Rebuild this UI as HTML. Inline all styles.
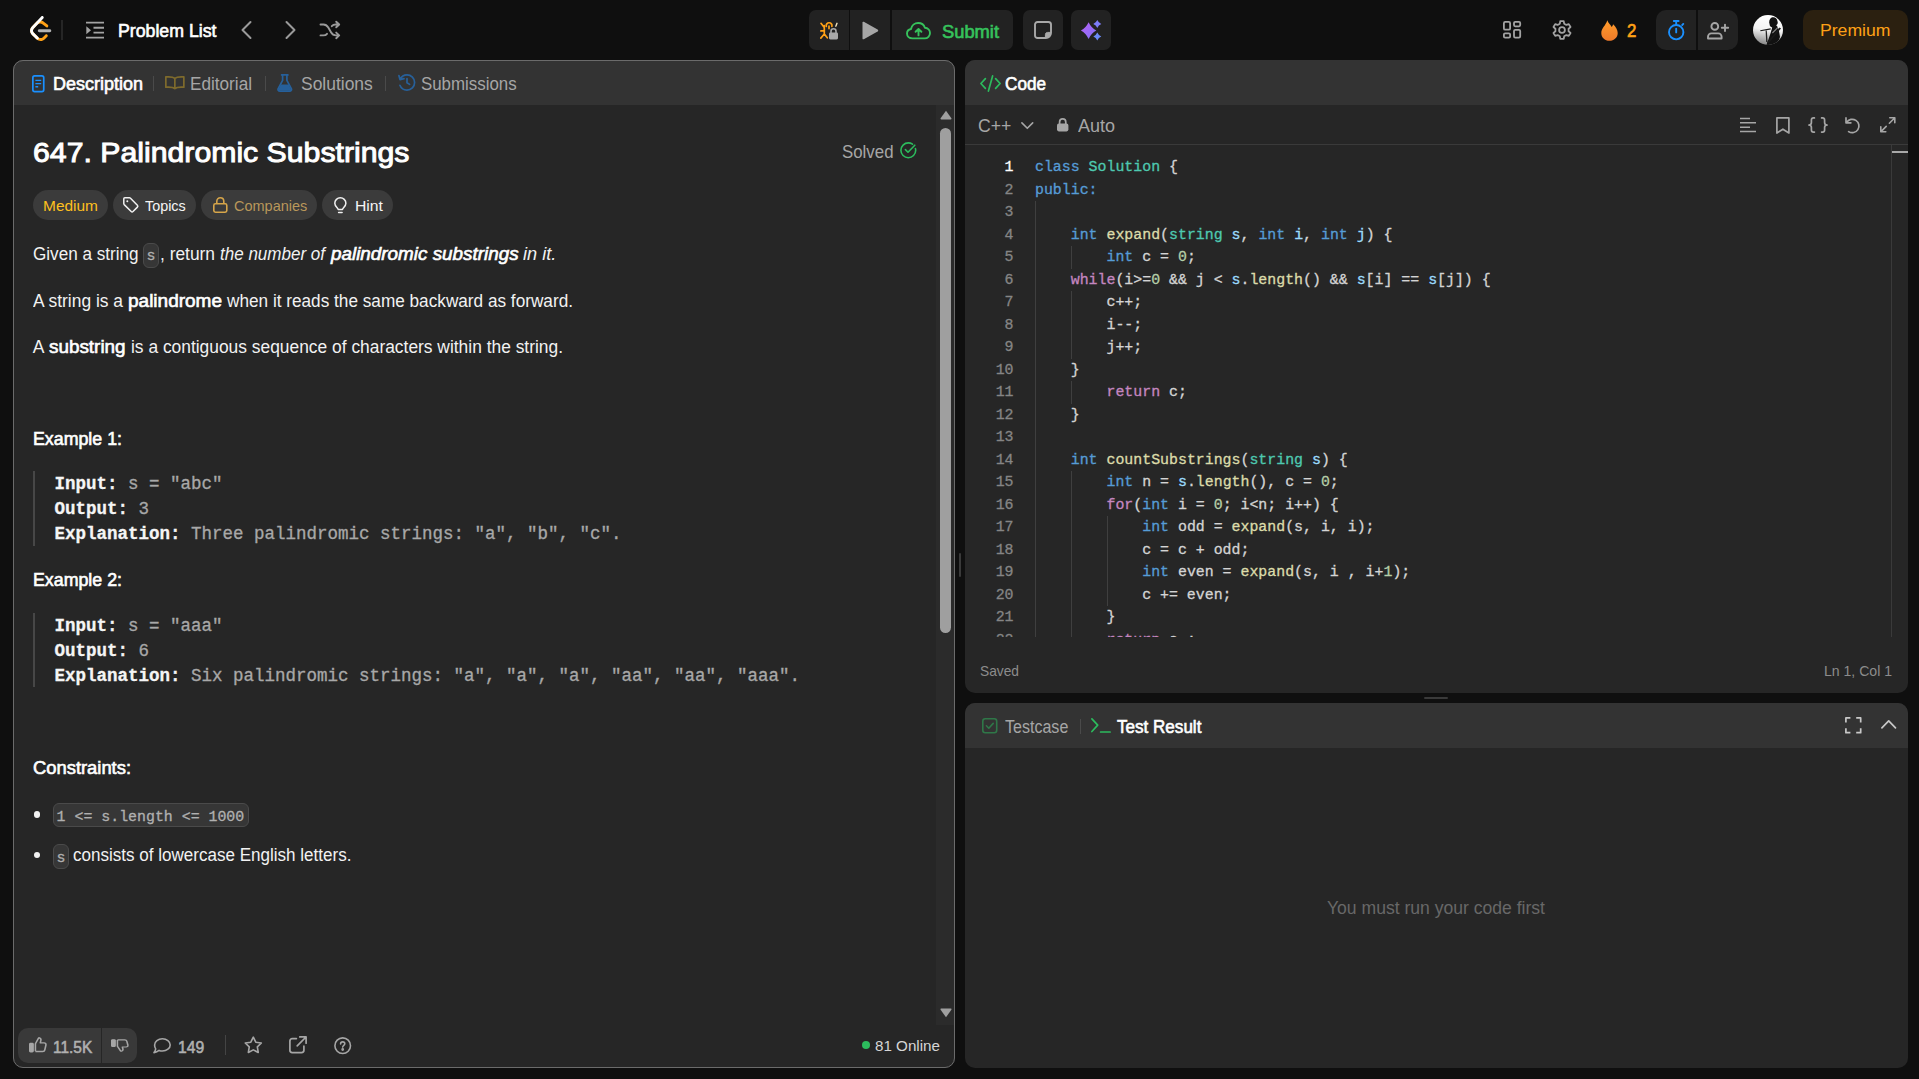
<!DOCTYPE html>
<html lang="en">
<head>
<meta charset="utf-8">
<title>Palindromic Substrings - LeetCode</title>
<style>
*{box-sizing:border-box;margin:0;padding:0}
html,body{width:1919px;height:1079px;overflow:hidden;background:#0f0f0f}
body{position:relative;font-family:"Liberation Sans",sans-serif;color:#f5f5f5;font-size:17.5px}
div,span.t,svg{position:absolute}
span.t{white-space:pre}
svg{overflow:visible}
.panel{background:#262626;border-radius:10px;overflow:hidden}
.hdr{left:0;top:0;right:0;height:45px;background:#333333}
.btn{background:#222222}
.pill{top:190.3px;height:29.7px;border-radius:15px;background:#3b3b3b}
.ic{background:#363636;border:1px solid #4a4a4a;border-radius:6px}
.bar{left:33px;width:2px;background:#474747}
.sep{width:1px;background:#4a4a4a}
.guide{width:1px;background:#3f3f3f}
.k{color:#569cd6}.ty{color:#4ec9b0}.f{color:#dcdcaa}.v{color:#9cdcfe}.c{color:#c586c0}.n{color:#b5cea8}
.pre b{color:#f5f5f5}
</style>
</head>
<body>
<div id="nav">
<svg style="left:29.6px;top:16px" width="21.4" height="25" viewBox="0 0 95 111"><path d="M68.0063 83.0664C70.5 80.5764 74.5366 80.5829 77.0223 83.0809C79.508 85.579 79.5015 89.6226 77.0078 92.1127L65.9346 103.17C55.7187 113.371 39.06 113.519 28.6718 103.513C28.6117 103.456 23.9861 98.9201 8.72653 83.957C-1.42528 74.0029 -2.43665 58.0749 7.11648 47.8464L24.9282 28.7745C34.4095 18.6219 51.887 17.5122 62.7275 26.2789L78.9048 39.362C81.6444 41.5776 82.0723 45.5985 79.8606 48.3429C77.6488 51.0873 73.635 51.5159 70.8954 49.3003L54.7182 36.2173C49.0488 31.6325 39.1314 32.2622 34.2394 37.5006L16.4274 56.5727C11.7767 61.5522 12.2861 69.574 17.6456 74.8292C28.851 85.8169 37.4869 94.2846 37.4969 94.2942C42.8977 99.496 51.6304 99.4184 56.9331 94.1234L68.0063 83.0664Z" fill="#FFA116"/><path d="M41.1067 72.0014C37.5858 72.0014 34.7314 69.1421 34.7314 65.615C34.7314 62.0879 37.5858 59.2286 41.1067 59.2286H88.1245C91.6454 59.2286 94.4997 62.0879 94.4997 65.615C94.4997 69.1421 91.6454 72.0014 88.1245 72.0014H41.1067Z" fill="#B3B3B3"/><path d="M49.9118 2.02335C52.3173 -0.55232 56.3517 -0.686894 58.9228 1.72277C61.494 4.13244 61.6284 8.17385 59.2229 10.7495L16.4276 56.5729C11.7768 61.552 12.2861 69.5738 17.6453 74.8292L37.4088 94.2091C39.9249 96.6764 39.968 100.72 37.505 103.24C35.042 105.761 31.0056 105.804 28.4895 103.337L8.72593 83.9567C-1.42529 74.0021 -2.43665 58.0741 7.1169 47.8463L49.9118 2.02335Z" fill="#fff"/></svg>
<div style="left:61px;top:20px;width:2px;height:20px;background:#262626"></div>
<svg style="left:86px;top:21px" width="18" height="18" viewBox="0 0 18 18" fill="none" stroke="#a3a3a3" stroke-width="1.9"><path d="M0 1.6H18M7.5 6.8H18M7.5 11.6H18M0 16.6H18"/><path d="M0.3 5.2L5 9.2L0.3 13.2Z" fill="#a3a3a3" stroke="none"/></svg>
<svg style="left:241px;top:21px" width="11" height="18" viewBox="0 0 11 18" fill="none" stroke="#9a9a9a" stroke-width="2" stroke-linecap="round" stroke-linejoin="round"><path d="M9.5 1L1.5 9L9.5 17"/></svg>
<svg style="left:284.5px;top:21px" width="11" height="18" viewBox="0 0 11 18" fill="none" stroke="#9a9a9a" stroke-width="2" stroke-linecap="round" stroke-linejoin="round"><path d="M1.5 1L9.5 9L1.5 17"/></svg>
<svg style="left:320px;top:21px" width="20" height="18" viewBox="0 0 20 18" fill="none" stroke="#9a9a9a" stroke-width="1.9" stroke-linecap="round" stroke-linejoin="round"><path d="M0.5 3.5H3.5C6 3.5 7 4.5 8.3 6.5L11 11.3C12.2 13.4 13.3 14.4 15.8 14.4H19M0.5 14.4H3.5C5 14.4 6.2 13.8 7 12.8M11.8 5.2C12.7 4.1 13.9 3.5 15.8 3.5H19M16.2 0.7L19.2 3.5L16.2 6.3M16.2 11.6L19.2 14.4L16.2 17.2"/></svg>

<div class="btn" style="left:809px;top:10px;width:40px;height:40px;border-radius:7px 0 0 7px"></div>
<div class="btn" style="left:850px;top:10px;width:40.3px;height:40px"></div>
<div class="btn" style="left:892.3px;top:10px;width:120.7px;height:40px;border-radius:0 7px 7px 0"></div>
<div class="btn" style="left:1023px;top:10px;width:40px;height:40px;border-radius:7px"></div>
<div class="btn" style="left:1071px;top:10px;width:40px;height:40px;border-radius:7px"></div>
<svg style="left:819px;top:21px" width="20" height="19" viewBox="0 0 20 19" fill="none" stroke="#ffa116" stroke-width="1.7" stroke-linecap="round"><path d="M7.3 5.4A2.9 2.9 0 1 1 12.9 5.4M10 5.2V7.6M5.3 4.7V13M5.3 6.5L2 2.3M5.3 9.9H1.9M5.3 13L1.8 17.1M5.3 13L8.3 16.8"/><path d="M16.8 5.2L18 2.3" stroke="#f3e3bd" stroke-width="1.4"/><rect x="10" y="11.4" width="9" height="7" rx="1.3" fill="#a9a9a9" stroke="none"/><path d="M12 11.8V10.2A2.5 2.5 0 0 1 17 10.2V11.8" stroke="#a9a9a9" stroke-width="1.6"/></svg>
<svg style="left:861.5px;top:20.5px" width="17" height="19" viewBox="0 0 17 19"><path d="M1.8 0.8L15.6 8.6C16.4 9.1 16.4 9.9 15.6 10.4L1.8 18.2C1 18.6 0.5 18.2 0.5 17.4V1.6C0.5 0.8 1 0.4 1.8 0.8Z" fill="#a6a6a6"/></svg>
<svg style="left:906px;top:21.5px" width="25" height="17.5" viewBox="0 0 25 17.5" fill="none" stroke="#36c25c" stroke-width="1.9" stroke-linecap="round" stroke-linejoin="round"><path d="M6.4 16.4C3.3 16.4 1 14.3 1 11.6C1 9.2 2.7 7.4 5 7C5.6 3.6 8.6 1 12.2 1C15.4 1 18 3 18.9 5.8C21.8 6 24 8.3 24 11.1C24 14 21.7 16.4 18.7 16.4Z"/><path d="M12.5 13.4V7.2M9.6 9.8L12.5 7L15.4 9.8"/></svg>
<svg style="left:1034px;top:20.6px" width="18" height="18" viewBox="0 0 18 18" fill="none" stroke="#a9a9a9" stroke-width="1.9" stroke-linejoin="round"><path d="M3.6 1H14.4C15.9 1 17 2.1 17 3.6V11.6C17 14.8 14.8 17 11.6 17H3.6C2.1 17 1 15.9 1 14.4V3.6C1 2.1 2.1 1 3.6 1Z"/><path d="M11.4 17V13.6C11.4 12.3 12.3 11.4 13.6 11.4H17C17 14.6 14.6 17 11.4 17Z" fill="#a9a9a9" stroke-width="1"/></svg>
<svg style="left:1081px;top:19.5px" width="21" height="21" viewBox="0 0 21 21"><defs><linearGradient id="spk" x1="0" y1="0" x2="1" y2="1"><stop offset="0" stop-color="#b860f5"/><stop offset="1" stop-color="#7f72f7"/></linearGradient></defs><path d="M7.6 2.20Q10.22 7.74 15.30 10.6Q10.22 13.46 7.6 19.00Q4.98 13.46 -0.10 10.6Q4.98 7.74 7.6 2.20Z" fill="url(#spk)"/><path d="M16.3 0.10Q17.50 2.90 20.30 4.1Q17.50 5.30 16.3 8.10Q15.10 5.30 12.30 4.1Q15.10 2.90 16.3 0.10Z" fill="#7d7cf8"/><path d="M16.3 12.60Q17.50 15.40 20.30 16.6Q17.50 17.80 16.3 20.60Q15.10 17.80 12.30 16.6Q15.10 15.40 16.3 12.60Z" fill="#6b8af8"/></svg>

<svg style="left:1503px;top:21.3px" width="18.5" height="17.5" viewBox="0 0 18.5 17.5" fill="none" stroke="#a3a3a3" stroke-width="1.8"><rect x="0.9" y="0.9" width="6.2" height="7.8" rx="1.3"/><rect x="0.9" y="12.4" width="6.2" height="4.2" rx="1.2"/><rect x="11" y="0.9" width="6.2" height="4.4" rx="1.2"/><rect x="11" y="8.8" width="6.2" height="7.8" rx="1.3"/></svg>
<svg style="left:1552px;top:20px" width="20" height="20" viewBox="0 0 20 20" fill="none" stroke="#a3a3a3" stroke-width="1.8" stroke-linejoin="round"><path d="M7.82 3.67L8.28 1.17L11.72 1.17L12.18 3.67L14.40 4.94L16.79 4.10L18.51 7.07L16.58 8.72L16.58 11.28L18.51 12.93L16.79 15.90L14.40 15.06L12.18 16.33L11.72 18.83L8.28 18.83L7.82 16.33L5.60 15.06L3.21 15.90L1.49 12.93L3.42 11.28L3.42 8.72L1.49 7.07L3.21 4.10L5.60 4.94Z"/><circle cx="10" cy="10" r="2.9"/></svg>
<svg style="left:1600.5px;top:19.8px" width="17" height="21" viewBox="0 0 17 21"><defs><linearGradient id="flm" x1="0" y1="0" x2="0" y2="1"><stop offset="0" stop-color="#ff9d2b"/><stop offset="1" stop-color="#f07a2a"/></linearGradient></defs><path d="M6.3 0.3C7.3 3.1 9.4 4.6 10.7 6.9C11.4 6.3 11.9 5.4 12.1 4.3C14.9 6.9 16.7 9.9 16.7 13C16.7 17.6 13 20.8 8.4 20.8S0.3 17.6 0.3 13C0.3 8.2 4.7 5.7 6.3 0.3Z" fill="url(#flm)"/></svg>
<div class="btn" style="left:1656px;top:10px;width:40px;height:40px;border-radius:10px 0 0 10px"></div>
<div class="btn" style="left:1697.5px;top:10px;width:40.5px;height:40px;border-radius:0 10px 10px 0"></div>
<svg style="left:1667.5px;top:19.5px" width="17" height="20.5" viewBox="0 0 17 20.5" fill="none" stroke="#1a90ff" stroke-width="1.9" stroke-linecap="round"><circle cx="8.2" cy="12.2" r="7.2"/><path d="M5.8 1H10.6M8.2 1V4.6M8.2 8.6V12.4M14.2 5L15.3 3.9"/></svg>
<svg style="left:1707px;top:21.5px" width="22" height="17.5" viewBox="0 0 22 17.5" fill="none" stroke="#a6a6a6" stroke-width="1.9" stroke-linecap="round" stroke-linejoin="round"><circle cx="7.8" cy="4.4" r="3.4"/><path d="M4.4 11.4H11.2C13.1 11.4 14.6 12.9 14.6 14.8V16.5H1V14.8C1 12.9 2.5 11.4 4.4 11.4Z"/><path d="M18 2.6V9M14.8 5.8H21.2"/></svg>
<svg style="left:1753px;top:14.5px" width="30" height="30" viewBox="0 0 30 30"><defs><linearGradient id="av" x1="0.3" y1="0" x2="0.15" y2="1"><stop offset="0" stop-color="#ffffff"/><stop offset="0.45" stop-color="#f4f4f4"/><stop offset="1" stop-color="#7c7c7c"/></linearGradient><clipPath id="avc"><circle cx="15" cy="15" r="15"/></clipPath></defs><g clip-path="url(#avc)"><rect width="30" height="30" fill="url(#av)"/><path d="M18.6 2.6C21 1.6 24.2 3 24.4 6C25.2 7.6 24.6 9.4 23.2 10.2C24.4 11.4 25.6 13 25.8 15L27 22L24 30H13.4L15.6 24L17.8 17.6L19.2 12.4C17.6 12 16.4 10.8 16.6 9.2C15.6 7.2 16.4 3.8 18.6 2.6Z" fill="#111"/><path d="M7.2 15.2L17.6 13.2L17.9 14.4L7.5 16.3Z" fill="#1c1c1c"/><path d="M12.6 15.6L13.8 15.4L14.6 27H13.2Z" fill="#222"/><path d="M26.6 12.4L14 27.5L15.4 28.6L28 13.4Z" fill="#1a1a1a"/><path d="M19 17.5L24.6 12L25.4 12.8L19.8 18.4Z" fill="#fff" opacity="0.5"/></g></svg>
<div style="position:absolute;left:1803px;top:10px;width:105px;height:40px;border-radius:10px;background:#2b2010"></div>
</div>

<span class="t" id="t_pl" style="left:117.50px;top:18.74px;line-height:24px;height:24px;font-size:17.5px;color:#ffffff;-webkit-text-stroke-width:0.60px;transform:scaleX(1.0127);transform-origin:0 0;">Problem List</span>
<span class="t" id="t_submit" style="left:941.50px;top:19.74px;line-height:24px;height:24px;font-size:17.5px;color:#36c25c;-webkit-text-stroke-width:0.60px;transform:scaleX(1.0465);transform-origin:0 0;">Submit</span>
<span class="t" id="t_two" style="left:1626.60px;top:19.26px;line-height:25px;height:25px;font-size:18px;color:#ffa116;-webkit-text-stroke-width:0.61px;transform:scaleX(0.9385);transform-origin:0 0;">2</span>
<span class="t" id="t_prem" style="left:1820.30px;top:17.87px;line-height:24px;height:24px;font-size:17.4px;color:#ffa116;transform:scaleX(1.0132);transform-origin:0 0;">Premium</span>
<div class="panel" style="left:13px;top:60px;width:942px;height:1008px"><div class="hdr"></div><div style="left:923px;top:45px;width:18px;height:920px;background:#2b2b2b"></div></div>
<div class="panel" style="left:965px;top:60px;width:943px;height:633px"><div class="hdr"></div></div>
<div class="panel" style="left:965px;top:703px;width:943px;height:365px"><div class="hdr"></div></div>
<div style="left:959px;top:553px;width:2px;height:24px;background:#3a3a3a;border-radius:1px"></div>
<div style="left:1424px;top:697px;width:24px;height:2px;background:#3a3a3a;border-radius:1px"></div>
<svg style="left:32px;top:74.5px" width="12.6" height="17.4" viewBox="0 0 12.6 17.4" fill="none" stroke="#1a90ff" stroke-width="1.7"><rect x="0.85" y="0.85" width="10.9" height="15.7" rx="1.8"/><path d="M3.4 5.4H9.2M3.4 8.6H9.2M3.4 11.8H6.2" stroke-width="1.4"/></svg>
<span class="t" id="t_desc" style="left:53.00px;top:71.74px;line-height:24px;height:24px;font-size:17.5px;color:#ffffff;-webkit-text-stroke-width:0.60px;transform:scaleX(1.0280);transform-origin:0 0;">Description</span>
<div class="sep" style="left:153.3px;top:75.5px;height:15px"></div>
<svg style="left:164.8px;top:76px;opacity:.5" width="19.7" height="13.6" viewBox="0 0 19.7 13.6" fill="none" stroke="#c9a227" stroke-width="1.7" stroke-linejoin="round"><path d="M9.85 2.4C8.6 1.3 6.4 0.85 3.6 0.85H0.85V11.2H3.6C6.4 11.2 8.6 11.6 9.85 12.7C11.1 11.6 13.3 11.2 16.1 11.2H18.85V0.85H16.1C13.3 0.85 11.1 1.3 9.85 2.4ZM9.85 2.4V12.7"/></svg>
<span class="t" id="t_edit" style="left:190.00px;top:71.74px;line-height:24px;height:24px;font-size:17.5px;color:#a6a6a6;transform:scaleX(0.9805);transform-origin:0 0;">Editorial</span>
<div class="sep" style="left:264.6px;top:75.5px;height:15px"></div>
<svg style="left:277.3px;top:73.5px;opacity:.6" width="15.5" height="18" viewBox="0 0 15.5 18"><path d="M4.6 0.9H10.9M5.6 0.9V6.4L1.2 14.6C0.6 15.8 1.4 17.1 2.8 17.1H12.7C14.1 17.1 14.9 15.8 14.3 14.6L9.9 6.4V0.9" fill="none" stroke="#1f7fe0" stroke-width="1.7" stroke-linecap="round" stroke-linejoin="round"/><path d="M3.9 10.4H11.6L13.9 15C14.2 15.8 13.7 16.6 12.9 16.6H2.6C1.8 16.6 1.3 15.8 1.6 15Z" fill="#1f7fe0"/></svg>
<span class="t" id="t_sol" style="left:301.20px;top:71.74px;line-height:24px;height:24px;font-size:17.5px;color:#a6a6a6;transform:scaleX(0.9972);transform-origin:0 0;">Solutions</span>
<div class="sep" style="left:385.3px;top:75.5px;height:15px"></div>
<svg style="left:397.7px;top:74px;opacity:.6" width="17.5" height="17.5" viewBox="0 0 17.5 17.5" fill="none" stroke="#1f7fe0" stroke-width="1.7" stroke-linecap="round" stroke-linejoin="round"><path d="M2.2 5.2C3.4 2.6 6 0.9 9 0.9C13.2 0.9 16.6 4.3 16.6 8.5S13.2 16.1 9 16.1C5.8 16.1 3 14.1 1.9 11.3M0.9 1.6L2 5.6L6 4.6M9 4.6V8.8L11.6 10.4"/></svg>
<span class="t" id="t_subm" style="left:421.40px;top:71.74px;line-height:24px;height:24px;font-size:17.5px;color:#a6a6a6;transform:scaleX(0.9635);transform-origin:0 0;">Submissions</span>
<span class="t" id="t_title" style="left:33.10px;top:131.92px;line-height:40px;height:40px;font-size:28.5px;color:#ffffff;-webkit-text-stroke-width:0.97px;transform:scaleX(1.0610);transform-origin:0 0;">647. Palindromic Substrings</span>
<span class="t" id="t_solved" style="left:841.50px;top:139.94px;line-height:24px;height:24px;font-size:17.5px;color:#a6a6a6;transform:scaleX(0.9623);transform-origin:0 0;">Solved</span>
<svg style="left:899.5px;top:141.5px" width="16.5" height="16.5" viewBox="0 0 16.5 16.5" fill="none" stroke="#2cbb5d" stroke-width="1.6" stroke-linecap="round" stroke-linejoin="round"><path d="M15.4 6.6C15.6 7.2 15.7 7.7 15.7 8.3C15.7 12.4 12.4 15.7 8.3 15.7S0.9 12.4 0.9 8.3S4.2 0.9 8.3 0.9C9.9 0.9 11.3 1.4 12.5 2.2"/><path d="M5.4 7.6L8 10.2L14.8 3.2"/></svg>
<div class="pill" style="left:33px;width:75px"></div>
<span class="t" id="t_medium" style="left:42.70px;top:194.90px;line-height:21px;height:21px;font-size:15px;color:#ffc01e;transform:scaleX(1.0307);transform-origin:0 0;">Medium</span>
<div class="pill" style="left:113.3px;width:82.4px"></div>
<svg style="left:122.7px;top:197px" width="15.6" height="15.6" viewBox="0 0 15.6 15.6" fill="none" stroke="#f0f0f0" stroke-width="1.5" stroke-linejoin="round"><path d="M0.8 1.8V6.6C0.8 7 0.95 7.3 1.2 7.6L8.2 14.5C8.7 15 9.5 15 10 14.5L14.4 10.1C14.9 9.6 14.9 8.8 14.4 8.3L7.5 1.3C7.2 1 6.9 0.8 6.5 0.8H1.8C1.2 0.8 0.8 1.2 0.8 1.8Z"/><circle cx="4.3" cy="4.3" r="1" fill="#f0f0f0" stroke="none"/></svg>
<span class="t" id="t_topics" style="left:145.30px;top:194.90px;line-height:21px;height:21px;font-size:15px;color:#f5f5f5;transform:scaleX(0.9569);transform-origin:0 0;">Topics</span>
<div class="pill" style="left:201px;width:115.7px"></div>
<svg style="left:212.7px;top:197px" width="14.6" height="16" viewBox="0 0 14.6 16" fill="none" stroke="#d6a54a" stroke-width="1.6" stroke-linejoin="round"><rect x="0.8" y="6.8" width="13" height="8.4" rx="1.6"/><path d="M3.8 6.8V4.3C3.8 2.3 5.3 0.8 7.3 0.8S10.8 2.3 10.8 4.3V6.8"/></svg>
<span class="t" id="t_comp" style="left:233.70px;top:194.90px;line-height:21px;height:21px;font-size:15px;color:#b9975a;transform:scaleX(0.9661);transform-origin:0 0;">Companies</span>
<div class="pill" style="left:322px;width:70.7px"></div>
<svg style="left:334.3px;top:196.5px" width="12.7" height="17" viewBox="0 0 12.7 17" fill="none" stroke="#f0f0f0" stroke-width="1.5" stroke-linecap="round" stroke-linejoin="round"><path d="M4.2 12.6C4.2 10.9 0.8 9.6 0.8 6.2C0.8 3.2 3.3 0.8 6.35 0.8S11.9 3.2 11.9 6.2C11.9 9.6 8.5 10.9 8.5 12.6ZM4.6 15.6H8.1"/></svg>
<span class="t" id="t_hint" style="left:354.70px;top:194.90px;line-height:21px;height:21px;font-size:15px;color:#f5f5f5;transform:scaleX(1.0492);transform-origin:0 0;">Hint</span>
<span class="t" id="p1a" style="left:32.70px;top:241.94px;line-height:24px;height:24px;font-size:17.5px;color:#f2f2f2;transform:scaleX(0.9781);transform-origin:0 0;">Given a string</span>
<div class="ic" style="left:143px;top:243.3px;width:16px;height:24.3px"></div>
<span class="t" id="p1c" style="left:146.60px;top:246.23px;line-height:21px;height:21px;font-size:14.9px;color:#b0b0b0;font-family:'Liberation Mono',monospace;-webkit-text-stroke-width:.3px;">s</span>
<span class="t" id="p1b" style="left:160.00px;top:241.94px;line-height:24px;height:24px;font-size:17.5px;color:#f2f2f2;transform:scaleX(0.9918);transform-origin:0 0;">, return</span>
<span class="t" id="p1d" style="left:220.00px;top:241.94px;line-height:24px;height:24px;font-size:17.5px;color:#f2f2f2;font-style:italic;transform:scaleX(0.9724);transform-origin:0 0;">the number of</span>
<span class="t" id="p1e" style="left:330.70px;top:241.94px;line-height:24px;height:24px;font-size:17.5px;color:#ffffff;-webkit-text-stroke-width:0.60px;font-style:italic;transform:scaleX(1.0775);transform-origin:0 0;">palindromic substrings</span>
<span class="t" id="p1f" style="left:523.30px;top:241.94px;line-height:24px;height:24px;font-size:17.5px;color:#f2f2f2;font-style:italic;transform:scaleX(1.0402);transform-origin:0 0;">in it.</span>
<span class="t" id="p2a" style="left:32.70px;top:288.64px;line-height:24px;height:24px;font-size:17.5px;color:#f2f2f2;transform:scaleX(0.9948);transform-origin:0 0;">A string is a</span>
<span class="t" id="p2b" style="left:127.70px;top:288.64px;line-height:24px;height:24px;font-size:17.5px;color:#ffffff;-webkit-text-stroke-width:0.60px;transform:scaleX(1.0857);transform-origin:0 0;">palindrome</span>
<span class="t" id="p2c" style="left:226.70px;top:288.64px;line-height:24px;height:24px;font-size:17.5px;color:#f2f2f2;transform:scaleX(0.9826);transform-origin:0 0;">when it reads the same backward as forward.</span>
<span class="t" id="p3a" style="left:32.70px;top:335.24px;line-height:24px;height:24px;font-size:17.5px;color:#f2f2f2;">A</span>
<span class="t" id="p3b" style="left:48.70px;top:335.24px;line-height:24px;height:24px;font-size:17.5px;color:#ffffff;-webkit-text-stroke-width:0.60px;transform:scaleX(1.0786);transform-origin:0 0;">substring</span>
<span class="t" id="p3c" style="left:130.70px;top:335.24px;line-height:24px;height:24px;font-size:17.5px;color:#f2f2f2;transform:scaleX(0.9935);transform-origin:0 0;">is a contiguous sequence of characters within the string.</span>
<span class="t" id="ex1" style="left:33.00px;top:426.94px;line-height:24px;height:24px;font-size:17.5px;color:#ffffff;-webkit-text-stroke-width:0.60px;transform:scaleX(1.0166);transform-origin:0 0;">Example 1:</span>
<div class="bar" style="top:471px;height:74.7px"></div>
<span class="t" id="e1al" style="left:54.50px;top:472.04px;line-height:24px;height:24px;font-size:17.5px;color:#f5f5f5;font-weight:bold;font-family:'Liberation Mono',monospace;-webkit-text-stroke-width:.3px;">Input:</span>
<span class="t" id="e1ar" style="left:128.00px;top:472.04px;line-height:24px;height:24px;font-size:17.5px;color:#a8a8a8;font-family:'Liberation Mono',monospace;-webkit-text-stroke-width:.3px;">s = "abc"</span>
<span class="t" id="e1bl" style="left:54.50px;top:497.04px;line-height:24px;height:24px;font-size:17.5px;color:#f5f5f5;font-weight:bold;font-family:'Liberation Mono',monospace;-webkit-text-stroke-width:.3px;">Output:</span>
<span class="t" id="e1br" style="left:138.50px;top:497.04px;line-height:24px;height:24px;font-size:17.5px;color:#a8a8a8;font-family:'Liberation Mono',monospace;-webkit-text-stroke-width:.3px;">3</span>
<span class="t" id="e1cl" style="left:54.50px;top:522.04px;line-height:24px;height:24px;font-size:17.5px;color:#f5f5f5;font-weight:bold;font-family:'Liberation Mono',monospace;-webkit-text-stroke-width:.3px;">Explanation:</span>
<span class="t" id="e1cr" style="left:191.00px;top:522.04px;line-height:24px;height:24px;font-size:17.5px;color:#a8a8a8;font-family:'Liberation Mono',monospace;-webkit-text-stroke-width:.3px;">Three palindromic strings: "a", "b", "c".</span>
<span class="t" id="ex2" style="left:33.00px;top:567.94px;line-height:24px;height:24px;font-size:17.5px;color:#ffffff;-webkit-text-stroke-width:0.60px;transform:scaleX(1.0166);transform-origin:0 0;">Example 2:</span>
<div class="bar" style="top:613.3px;height:74px"></div>
<span class="t" id="e2al" style="left:54.50px;top:614.14px;line-height:24px;height:24px;font-size:17.5px;color:#f5f5f5;font-weight:bold;font-family:'Liberation Mono',monospace;-webkit-text-stroke-width:.3px;">Input:</span>
<span class="t" id="e2ar" style="left:128.00px;top:614.14px;line-height:24px;height:24px;font-size:17.5px;color:#a8a8a8;font-family:'Liberation Mono',monospace;-webkit-text-stroke-width:.3px;">s = "aaa"</span>
<span class="t" id="e2bl" style="left:54.50px;top:639.14px;line-height:24px;height:24px;font-size:17.5px;color:#f5f5f5;font-weight:bold;font-family:'Liberation Mono',monospace;-webkit-text-stroke-width:.3px;">Output:</span>
<span class="t" id="e2br" style="left:138.50px;top:639.14px;line-height:24px;height:24px;font-size:17.5px;color:#a8a8a8;font-family:'Liberation Mono',monospace;-webkit-text-stroke-width:.3px;">6</span>
<span class="t" id="e2cl" style="left:54.50px;top:664.14px;line-height:24px;height:24px;font-size:17.5px;color:#f5f5f5;font-weight:bold;font-family:'Liberation Mono',monospace;-webkit-text-stroke-width:.3px;">Explanation:</span>
<span class="t" id="e2cr" style="left:191.00px;top:664.14px;line-height:24px;height:24px;font-size:17.5px;color:#a8a8a8;font-family:'Liberation Mono',monospace;-webkit-text-stroke-width:.3px;">Six palindromic strings: "a", "a", "a", "aa", "aa", "aaa".</span>
<span class="t" id="cons" style="left:33.00px;top:755.94px;line-height:24px;height:24px;font-size:17.5px;color:#ffffff;-webkit-text-stroke-width:0.60px;transform:scaleX(1.0495);transform-origin:0 0;">Constraints:</span>
<div style="left:33.5px;top:811px;width:6.6px;height:6.6px;border-radius:50%;background:#f2f2f2"></div>
<div style="left:33.5px;top:851.5px;width:6.6px;height:6.6px;border-radius:50%;background:#f2f2f2"></div>
<div class="ic" style="left:52.7px;top:802.7px;width:196px;height:24.6px"></div>
<span class="t" id="c1" style="left:56.60px;top:806.83px;line-height:21px;height:21px;font-size:14.9px;color:#b0b0b0;font-family:'Liberation Mono',monospace;-webkit-text-stroke-width:.3px;">1 &lt;= s.length &lt;= 1000</span>
<div class="ic" style="left:52.7px;top:844px;width:16.3px;height:24.7px"></div>
<span class="t" id="c2s" style="left:56.60px;top:847.53px;line-height:21px;height:21px;font-size:14.9px;color:#b0b0b0;font-family:'Liberation Mono',monospace;-webkit-text-stroke-width:.3px;">s</span>
<span class="t" id="c2" style="left:73.30px;top:843.44px;line-height:24px;height:24px;font-size:17.5px;color:#f2f2f2;transform:scaleX(0.9735);transform-origin:0 0;">consists of lowercase English letters.</span>
<svg style="left:939.5px;top:110px" width="12" height="10" viewBox="0 0 12 10"><path d="M6 0.8L11.4 8.2C11.7 8.7 11.4 9.4 10.8 9.4H1.2C0.6 9.4 0.3 8.7 0.6 8.2Z" fill="#9f9f9f"/></svg>
<div style="left:940px;top:127.5px;width:11px;height:505px;border-radius:5.5px;background:#9f9f9f"></div>
<svg style="left:939.5px;top:1008px" width="12" height="10" viewBox="0 0 12 10"><path d="M6 9.2L11.4 1.8C11.7 1.3 11.4 0.6 10.8 0.6H1.2C0.6 0.6 0.3 1.3 0.6 1.8Z" fill="#9f9f9f"/></svg>
<div style="left:18px;top:1028px;width:83px;height:35px;border-radius:10px 0 0 10px;background:#393939"></div>
<div style="left:102px;top:1028px;width:35px;height:35px;border-radius:0 10px 10px 0;background:#393939"></div>
<svg style="left:28.7px;top:1037.3px" width="18" height="15.6" viewBox="0 0 18.5 17" preserveAspectRatio="none" fill="none" stroke="#a6a6a6" stroke-width="1.6" stroke-linejoin="round"><rect x="0.8" y="7.2" width="3.4" height="8.8" rx="0.8" fill="#a6a6a6"/><path d="M6.6 15.6V7.4L9.8 1.2C10 0.9 10.4 0.8 10.7 0.9C11.9 1.3 12.5 2.5 12.2 3.7L11.6 6.4H15.6C16.8 6.4 17.7 7.5 17.4 8.7L16.2 14.2C16 15.2 15.2 15.9 14.2 15.9H6.6"/></svg>
<span class="t" id="b_like" style="left:52.50px;top:1035.78px;line-height:23px;height:23px;font-size:16.5px;color:#b0b0b0;-webkit-text-stroke-width:0.56px;transform:scaleX(0.9354);transform-origin:0 0;">11.5K</span>
<svg style="left:110.8px;top:1039.2px" width="18" height="12.8" viewBox="0 0 18.5 17" preserveAspectRatio="none" fill="none" stroke="#a6a6a6" stroke-width="1.6" stroke-linejoin="round"><rect x="0.8" y="1" width="3.4" height="8.8" rx="0.8" fill="#a6a6a6"/><path d="M6.6 1.4V9.6L9.8 15.8C10 16.1 10.4 16.2 10.7 16.1C11.9 15.7 12.5 14.5 12.2 13.3L11.6 10.6H15.6C16.8 10.6 17.7 9.5 17.4 8.3L16.2 2.8C16 1.8 15.2 1.1 14.2 1.1H6.6"/></svg>
<svg style="left:153px;top:1037.5px" width="18" height="15.5" viewBox="0 0 18 15.5" fill="none" stroke="#a6a6a6" stroke-width="1.6" stroke-linejoin="round"><path d="M9.4 0.8C13.7 0.8 17.2 3.5 17.2 6.9S13.7 13 9.4 13C8.2 13 7.1 12.8 6.1 12.4C4.9 13.4 3.2 14.3 1 14.6C2 13.5 2.5 12.2 2.7 10.9C1.9 9.8 1.6 8.4 1.6 6.9C1.6 3.5 5.1 0.8 9.4 0.8Z"/></svg>
<span class="t" id="b_cmt" style="left:178.00px;top:1035.78px;line-height:23px;height:23px;font-size:16.5px;color:#b0b0b0;-webkit-text-stroke-width:0.56px;transform:scaleX(0.9516);transform-origin:0 0;">149</span>
<div class="sep" style="left:225px;top:1035px;height:20px;background:#444"></div>
<svg style="left:243.5px;top:1036px" width="18.6" height="17.8" viewBox="0 0 24 23" fill="none" stroke="#a6a6a6" stroke-width="2.1" stroke-linejoin="round"><path d="M12 1.5L15.2 8L22.4 9L17.2 14.1L18.4 21.3L12 17.9L5.6 21.3L6.8 14.1L1.6 9L8.8 8Z"/></svg>
<svg style="left:288.7px;top:1036px" width="18" height="17.5" viewBox="0 0 18 17.5" fill="none" stroke="#a6a6a6" stroke-width="1.7" stroke-linecap="round" stroke-linejoin="round"><path d="M7.4 2.6H3.2C1.9 2.6 0.9 3.6 0.9 4.9V14.3C0.9 15.6 1.9 16.6 3.2 16.6H12.6C13.9 16.6 14.9 15.6 14.9 14.3V10.2M10.8 0.9H17.1V7.2M17 1L8.2 9.8"/></svg>
<svg style="left:334px;top:1036.5px" width="17.4" height="17.4" viewBox="0 0 17.4 17.4" fill="none" stroke="#a6a6a6" stroke-width="1.6" stroke-linecap="round"><circle cx="8.7" cy="8.7" r="7.8"/><path d="M6.6 6.9C6.6 5.6 7.5 4.9 8.7 4.9S10.8 5.7 10.8 6.8C10.8 8.3 8.7 8.5 8.7 10.1"/><circle cx="8.7" cy="12.5" r="0.6" fill="#a6a6a6"/></svg>
<div style="left:862px;top:1041px;width:8.4px;height:8.4px;border-radius:50%;background:#2cbb5d"></div>
<span class="t" id="b_onl" style="left:874.80px;top:1035.30px;line-height:21px;height:21px;font-size:15px;color:#d6d6d6;transform:scaleX(1.0122);transform-origin:0 0;">81 Online</span>
<div style="left:13px;top:60px;width:942px;height:1008px;border:1px solid #6b6b6b;border-radius:10px"></div>
<svg style="left:979.5px;top:75px" width="21" height="17" viewBox="0 0 21 17" fill="none" stroke="#2cbb5d" stroke-width="1.7" stroke-linecap="round" stroke-linejoin="round"><path d="M5.4 3.6L0.9 8.5L5.4 13.4M15.6 3.6L20.1 8.5L15.6 13.4M12.6 0.9L8.4 16.1"/></svg>
<span class="t" id="t_code" style="left:1005.30px;top:72.44px;line-height:24px;height:24px;font-size:17.5px;color:#ffffff;-webkit-text-stroke-width:0.60px;transform:scaleX(0.9798);transform-origin:0 0;">Code</span>
<span class="t" id="t_cpp" style="left:977.50px;top:114.34px;line-height:24px;height:24px;font-size:17.5px;color:#a6a6a6;transform:scaleX(1.0067);transform-origin:0 0;">C++</span>
<svg style="left:1020.8px;top:122.4px" width="12.6" height="7.2" viewBox="0 0 12.6 7.2" fill="none" stroke="#a6a6a6" stroke-width="1.6" stroke-linecap="round" stroke-linejoin="round"><path d="M0.9 0.9L6.3 6.3L11.7 0.9"/></svg>
<svg style="left:1056.8px;top:118px" width="11.4" height="13.4" viewBox="0 0 11.4 13.4"><rect x="0" y="5.6" width="11.4" height="7.8" rx="1.8" fill="#a6a6a6"/><path d="M2.6 6V3.9C2.6 2.2 3.9 0.9 5.7 0.9S8.8 2.2 8.8 3.9V6" fill="none" stroke="#a6a6a6" stroke-width="1.7"/></svg>
<span class="t" id="t_auto" style="left:1077.60px;top:114.34px;line-height:24px;height:24px;font-size:17.5px;color:#a6a6a6;transform:scaleX(1.0278);transform-origin:0 0;">Auto</span>
<div style="left:965px;top:144px;width:943px;height:1px;background:#3a3a3a"></div>
<svg style="left:1740px;top:117px" width="16" height="16" viewBox="0 0 16 16" fill="none" stroke="#a6a6a6" stroke-width="1.5"><path d="M0 1.4H10M0 5.8H16M0 10.2H10M0 14.6H16"/></svg>
<svg style="left:1776.3px;top:116.6px" width="13.8" height="17" viewBox="0 0 13.8 17" fill="none" stroke="#a6a6a6" stroke-width="1.7" stroke-linejoin="round"><path d="M0.9 0.9H12.9V16L6.9 12.2L0.9 16Z"/></svg>
<svg style="left:1808.2px;top:117px" width="20" height="16" viewBox="0 0 20 16" fill="none" stroke="#a6a6a6" stroke-width="1.7" stroke-linecap="round" stroke-linejoin="round"><path d="M6.4 0.9H5.6C4.2 0.9 3.4 1.7 3.4 3.1V5.6C3.4 7 2.6 8 0.9 8C2.6 8 3.4 9 3.4 10.4V12.9C3.4 14.3 4.2 15.1 5.6 15.1H6.4M13.6 0.9H14.4C15.8 0.9 16.6 1.7 16.6 3.1V5.6C16.6 7 17.4 8 19.1 8C17.4 8 16.6 9 16.6 10.4V12.9C16.6 14.3 15.8 15.1 14.4 15.1H13.6"/></svg>
<svg style="left:1844.5px;top:116.6px" width="16.4" height="16.6" viewBox="0 0 16.4 16.6" fill="none" stroke="#a6a6a6" stroke-width="1.7" stroke-linecap="round" stroke-linejoin="round"><path d="M1 0.9V5.8H5.9M1.6 5.4A6.7 6.7 0 1 1 3.6 14.6"/></svg>
<svg style="left:1880.2px;top:117px" width="15.6" height="15.6" viewBox="0 0 15.6 15.6" fill="none" stroke="#a6a6a6" stroke-width="1.6" stroke-linecap="round" stroke-linejoin="round"><path d="M9.8 0.8H14.8V5.8M14.6 1L9.4 6.2M5.8 14.8H0.8V9.8M1 14.6L6.2 9.4"/></svg>
<div style="left:965px;top:145px;width:943px;height:492px;overflow:hidden">
<div class="guide" style="left:70px;top:56.25px;height:450.00px"></div>
<div class="guide" style="left:106px;top:101.25px;height:22.50px"></div>
<div class="guide" style="left:106px;top:146.25px;height:67.50px"></div>
<div class="guide" style="left:106px;top:236.25px;height:22.50px"></div>
<div class="guide" style="left:106px;top:326.25px;height:180.00px"></div>
<div class="guide" style="left:142px;top:371.25px;height:90.00px"></div>
<span class="t" style="left:0;width:48.5px;text-align:right;top:11.25px;height:22.5px;line-height:22.5px;font-family:'Liberation Mono',monospace;font-size:14.9px;letter-spacing:-0.0025px;-webkit-text-stroke-width:.3px;color:#ffffff">1</span>
<span class="t" style="left:70px;top:11.25px;height:22.5px;line-height:22.5px;font-family:'Liberation Mono',monospace;font-size:14.9px;letter-spacing:-0.0025px;-webkit-text-stroke-width:.3px;color:#d4d4d4"><span class="k">class</span> <span class="ty">Solution</span> {</span>
<span class="t" style="left:0;width:48.5px;text-align:right;top:33.75px;height:22.5px;line-height:22.5px;font-family:'Liberation Mono',monospace;font-size:14.9px;letter-spacing:-0.0025px;-webkit-text-stroke-width:.3px;color:#858585">2</span>
<span class="t" style="left:70px;top:33.75px;height:22.5px;line-height:22.5px;font-family:'Liberation Mono',monospace;font-size:14.9px;letter-spacing:-0.0025px;-webkit-text-stroke-width:.3px;color:#d4d4d4"><span class="k">public:</span></span>
<span class="t" style="left:0;width:48.5px;text-align:right;top:56.25px;height:22.5px;line-height:22.5px;font-family:'Liberation Mono',monospace;font-size:14.9px;letter-spacing:-0.0025px;-webkit-text-stroke-width:.3px;color:#858585">3</span>
<span class="t" style="left:0;width:48.5px;text-align:right;top:78.75px;height:22.5px;line-height:22.5px;font-family:'Liberation Mono',monospace;font-size:14.9px;letter-spacing:-0.0025px;-webkit-text-stroke-width:.3px;color:#858585">4</span>
<span class="t" style="left:70px;top:78.75px;height:22.5px;line-height:22.5px;font-family:'Liberation Mono',monospace;font-size:14.9px;letter-spacing:-0.0025px;-webkit-text-stroke-width:.3px;color:#d4d4d4">    <span class="k">int</span> <span class="f">expand</span>(<span class="ty">string</span> <span class="v">s</span>, <span class="k">int</span> <span class="v">i</span>, <span class="k">int</span> <span class="v">j</span>) {</span>
<span class="t" style="left:0;width:48.5px;text-align:right;top:101.25px;height:22.5px;line-height:22.5px;font-family:'Liberation Mono',monospace;font-size:14.9px;letter-spacing:-0.0025px;-webkit-text-stroke-width:.3px;color:#858585">5</span>
<span class="t" style="left:70px;top:101.25px;height:22.5px;line-height:22.5px;font-family:'Liberation Mono',monospace;font-size:14.9px;letter-spacing:-0.0025px;-webkit-text-stroke-width:.3px;color:#d4d4d4">        <span class="k">int</span> c = <span class="n">0</span>;</span>
<span class="t" style="left:0;width:48.5px;text-align:right;top:123.75px;height:22.5px;line-height:22.5px;font-family:'Liberation Mono',monospace;font-size:14.9px;letter-spacing:-0.0025px;-webkit-text-stroke-width:.3px;color:#858585">6</span>
<span class="t" style="left:70px;top:123.75px;height:22.5px;line-height:22.5px;font-family:'Liberation Mono',monospace;font-size:14.9px;letter-spacing:-0.0025px;-webkit-text-stroke-width:.3px;color:#d4d4d4">    <span class="c">while</span>(i&gt;=<span class="n">0</span> &amp;&amp; j &lt; <span class="v">s</span>.<span class="f">length</span>() &amp;&amp; <span class="v">s</span>[i] == <span class="v">s</span>[j]) {</span>
<span class="t" style="left:0;width:48.5px;text-align:right;top:146.25px;height:22.5px;line-height:22.5px;font-family:'Liberation Mono',monospace;font-size:14.9px;letter-spacing:-0.0025px;-webkit-text-stroke-width:.3px;color:#858585">7</span>
<span class="t" style="left:70px;top:146.25px;height:22.5px;line-height:22.5px;font-family:'Liberation Mono',monospace;font-size:14.9px;letter-spacing:-0.0025px;-webkit-text-stroke-width:.3px;color:#d4d4d4">        c++;</span>
<span class="t" style="left:0;width:48.5px;text-align:right;top:168.75px;height:22.5px;line-height:22.5px;font-family:'Liberation Mono',monospace;font-size:14.9px;letter-spacing:-0.0025px;-webkit-text-stroke-width:.3px;color:#858585">8</span>
<span class="t" style="left:70px;top:168.75px;height:22.5px;line-height:22.5px;font-family:'Liberation Mono',monospace;font-size:14.9px;letter-spacing:-0.0025px;-webkit-text-stroke-width:.3px;color:#d4d4d4">        i--;</span>
<span class="t" style="left:0;width:48.5px;text-align:right;top:191.25px;height:22.5px;line-height:22.5px;font-family:'Liberation Mono',monospace;font-size:14.9px;letter-spacing:-0.0025px;-webkit-text-stroke-width:.3px;color:#858585">9</span>
<span class="t" style="left:70px;top:191.25px;height:22.5px;line-height:22.5px;font-family:'Liberation Mono',monospace;font-size:14.9px;letter-spacing:-0.0025px;-webkit-text-stroke-width:.3px;color:#d4d4d4">        j++;</span>
<span class="t" style="left:0;width:48.5px;text-align:right;top:213.75px;height:22.5px;line-height:22.5px;font-family:'Liberation Mono',monospace;font-size:14.9px;letter-spacing:-0.0025px;-webkit-text-stroke-width:.3px;color:#858585">10</span>
<span class="t" style="left:70px;top:213.75px;height:22.5px;line-height:22.5px;font-family:'Liberation Mono',monospace;font-size:14.9px;letter-spacing:-0.0025px;-webkit-text-stroke-width:.3px;color:#d4d4d4">    }</span>
<span class="t" style="left:0;width:48.5px;text-align:right;top:236.25px;height:22.5px;line-height:22.5px;font-family:'Liberation Mono',monospace;font-size:14.9px;letter-spacing:-0.0025px;-webkit-text-stroke-width:.3px;color:#858585">11</span>
<span class="t" style="left:70px;top:236.25px;height:22.5px;line-height:22.5px;font-family:'Liberation Mono',monospace;font-size:14.9px;letter-spacing:-0.0025px;-webkit-text-stroke-width:.3px;color:#d4d4d4">        <span class="c">return</span> c;</span>
<span class="t" style="left:0;width:48.5px;text-align:right;top:258.75px;height:22.5px;line-height:22.5px;font-family:'Liberation Mono',monospace;font-size:14.9px;letter-spacing:-0.0025px;-webkit-text-stroke-width:.3px;color:#858585">12</span>
<span class="t" style="left:70px;top:258.75px;height:22.5px;line-height:22.5px;font-family:'Liberation Mono',monospace;font-size:14.9px;letter-spacing:-0.0025px;-webkit-text-stroke-width:.3px;color:#d4d4d4">    }</span>
<span class="t" style="left:0;width:48.5px;text-align:right;top:281.25px;height:22.5px;line-height:22.5px;font-family:'Liberation Mono',monospace;font-size:14.9px;letter-spacing:-0.0025px;-webkit-text-stroke-width:.3px;color:#858585">13</span>
<span class="t" style="left:0;width:48.5px;text-align:right;top:303.75px;height:22.5px;line-height:22.5px;font-family:'Liberation Mono',monospace;font-size:14.9px;letter-spacing:-0.0025px;-webkit-text-stroke-width:.3px;color:#858585">14</span>
<span class="t" style="left:70px;top:303.75px;height:22.5px;line-height:22.5px;font-family:'Liberation Mono',monospace;font-size:14.9px;letter-spacing:-0.0025px;-webkit-text-stroke-width:.3px;color:#d4d4d4">    <span class="k">int</span> <span class="f">countSubstrings</span>(<span class="ty">string</span> <span class="v">s</span>) {</span>
<span class="t" style="left:0;width:48.5px;text-align:right;top:326.25px;height:22.5px;line-height:22.5px;font-family:'Liberation Mono',monospace;font-size:14.9px;letter-spacing:-0.0025px;-webkit-text-stroke-width:.3px;color:#858585">15</span>
<span class="t" style="left:70px;top:326.25px;height:22.5px;line-height:22.5px;font-family:'Liberation Mono',monospace;font-size:14.9px;letter-spacing:-0.0025px;-webkit-text-stroke-width:.3px;color:#d4d4d4">        <span class="k">int</span> n = <span class="v">s</span>.<span class="f">length</span>(), c = <span class="n">0</span>;</span>
<span class="t" style="left:0;width:48.5px;text-align:right;top:348.75px;height:22.5px;line-height:22.5px;font-family:'Liberation Mono',monospace;font-size:14.9px;letter-spacing:-0.0025px;-webkit-text-stroke-width:.3px;color:#858585">16</span>
<span class="t" style="left:70px;top:348.75px;height:22.5px;line-height:22.5px;font-family:'Liberation Mono',monospace;font-size:14.9px;letter-spacing:-0.0025px;-webkit-text-stroke-width:.3px;color:#d4d4d4">        <span class="c">for</span>(<span class="k">int</span> i = <span class="n">0</span>; i&lt;n; i++) {</span>
<span class="t" style="left:0;width:48.5px;text-align:right;top:371.25px;height:22.5px;line-height:22.5px;font-family:'Liberation Mono',monospace;font-size:14.9px;letter-spacing:-0.0025px;-webkit-text-stroke-width:.3px;color:#858585">17</span>
<span class="t" style="left:70px;top:371.25px;height:22.5px;line-height:22.5px;font-family:'Liberation Mono',monospace;font-size:14.9px;letter-spacing:-0.0025px;-webkit-text-stroke-width:.3px;color:#d4d4d4">            <span class="k">int</span> odd = <span class="f">expand</span>(s, i, i);</span>
<span class="t" style="left:0;width:48.5px;text-align:right;top:393.75px;height:22.5px;line-height:22.5px;font-family:'Liberation Mono',monospace;font-size:14.9px;letter-spacing:-0.0025px;-webkit-text-stroke-width:.3px;color:#858585">18</span>
<span class="t" style="left:70px;top:393.75px;height:22.5px;line-height:22.5px;font-family:'Liberation Mono',monospace;font-size:14.9px;letter-spacing:-0.0025px;-webkit-text-stroke-width:.3px;color:#d4d4d4">            c = c + odd;</span>
<span class="t" style="left:0;width:48.5px;text-align:right;top:416.25px;height:22.5px;line-height:22.5px;font-family:'Liberation Mono',monospace;font-size:14.9px;letter-spacing:-0.0025px;-webkit-text-stroke-width:.3px;color:#858585">19</span>
<span class="t" style="left:70px;top:416.25px;height:22.5px;line-height:22.5px;font-family:'Liberation Mono',monospace;font-size:14.9px;letter-spacing:-0.0025px;-webkit-text-stroke-width:.3px;color:#d4d4d4">            <span class="k">int</span> even = <span class="f">expand</span>(s, i , i+<span class="n">1</span>);</span>
<span class="t" style="left:0;width:48.5px;text-align:right;top:438.75px;height:22.5px;line-height:22.5px;font-family:'Liberation Mono',monospace;font-size:14.9px;letter-spacing:-0.0025px;-webkit-text-stroke-width:.3px;color:#858585">20</span>
<span class="t" style="left:70px;top:438.75px;height:22.5px;line-height:22.5px;font-family:'Liberation Mono',monospace;font-size:14.9px;letter-spacing:-0.0025px;-webkit-text-stroke-width:.3px;color:#d4d4d4">            c += even;</span>
<span class="t" style="left:0;width:48.5px;text-align:right;top:461.25px;height:22.5px;line-height:22.5px;font-family:'Liberation Mono',monospace;font-size:14.9px;letter-spacing:-0.0025px;-webkit-text-stroke-width:.3px;color:#858585">21</span>
<span class="t" style="left:70px;top:461.25px;height:22.5px;line-height:22.5px;font-family:'Liberation Mono',monospace;font-size:14.9px;letter-spacing:-0.0025px;-webkit-text-stroke-width:.3px;color:#d4d4d4">        }</span>
<span class="t" style="left:0;width:48.5px;text-align:right;top:483.75px;height:22.5px;line-height:22.5px;font-family:'Liberation Mono',monospace;font-size:14.9px;letter-spacing:-0.0025px;-webkit-text-stroke-width:.3px;color:#858585">22</span>
<span class="t" style="left:70px;top:483.75px;height:22.5px;line-height:22.5px;font-family:'Liberation Mono',monospace;font-size:14.9px;letter-spacing:-0.0025px;-webkit-text-stroke-width:.3px;color:#d4d4d4">        <span class="c">return</span> c ;</span>
<div style="left:925.5px;top:0;width:1px;height:492px;background:#3a3a3a"></div>
<div style="left:926.5px;top:5.5px;width:17px;height:2px;background:#a8a8a8"></div>
</div>
<span class="t" id="t_saved" style="left:980.40px;top:659.90px;line-height:21px;height:21px;font-size:15px;color:#8c8c8c;transform:scaleX(0.9166);transform-origin:0 0;">Saved</span>
<span class="t" id="t_lncol" style="left:1824.00px;top:659.90px;line-height:21px;height:21px;font-size:15px;color:#8c8c8c;transform:scaleX(0.9373);transform-origin:0 0;">Ln 1, Col 1</span>
<svg style="left:981.8px;top:717.5px;opacity:.5" width="15.5" height="15.5" viewBox="0 0 15.5 15.5" fill="none" stroke="#2cbb5d" stroke-width="1.6" stroke-linecap="round" stroke-linejoin="round"><rect x="0.8" y="0.8" width="13.9" height="13.9" rx="2.4"/><path d="M4.4 7.8L6.8 10.2L11.2 5.4"/></svg>
<span class="t" id="t_tc" style="left:1005.20px;top:715.14px;line-height:24px;height:24px;font-size:17.5px;color:#a6a6a6;transform:scaleX(0.9166);transform-origin:0 0;">Testcase</span>
<div class="sep" style="left:1079.5px;top:718.5px;height:15px"></div>
<svg style="left:1090.6px;top:718.4px" width="20" height="15" viewBox="0 0 20 15" fill="none" stroke="#2cbb5d" stroke-width="1.7" stroke-linecap="round" stroke-linejoin="round"><path d="M0.9 0.9L6.7 7.2L0.9 13.5M9.6 14H19.1"/></svg>
<span class="t" id="t_tr" style="left:1116.80px;top:715.14px;line-height:24px;height:24px;font-size:17.5px;color:#ffffff;-webkit-text-stroke-width:0.60px;transform:scaleX(0.9750);transform-origin:0 0;">Test Result</span>
<svg style="left:1844.6px;top:717.4px" width="16.6" height="16.6" viewBox="0 0 16.6 16.6" fill="none" stroke="#c8c8c8" stroke-width="1.7" stroke-linejoin="round"><path d="M0.9 5.4V0.9H5.4M11.2 0.9H15.7V5.4M15.7 11.2V15.7H11.2M5.4 15.7H0.9V11.2"/></svg>
<svg style="left:1880.5px;top:719.5px" width="15.4" height="8.8" viewBox="0 0 15.4 8.8" fill="none" stroke="#c8c8c8" stroke-width="1.7" stroke-linecap="round" stroke-linejoin="round"><path d="M0.9 7.9L7.7 0.9L14.5 7.9"/></svg>
<span class="t" id="t_must" style="left:1327.00px;top:895.94px;line-height:24px;height:24px;font-size:17.5px;color:#686868;transform:scaleX(1.0035);transform-origin:0 0;">You must run your code first</span>
</body>
</html>
